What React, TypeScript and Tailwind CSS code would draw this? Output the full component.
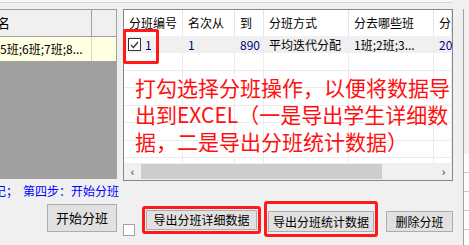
import React from "react";

const COLS = [
  { title: "分班编号", w: "w-[59px]" },
  { title: "名次从", w: "w-[52px]" },
  { title: "到", w: "w-[29px]" },
  { title: "分班方式", w: "w-[85px]" },
  { title: "分去哪些班", w: "w-[85px]" },
  { title: "分", w: "flex-1" },
];

const ROW = ["1", "1", "890", "平均迭代分配", "1班;2班;3...", "20"];

const CheckIcon = () => (
  <svg width="9" height="8" viewBox="0 0 9 8" fill="none">
    <path d="M1 4 L3.5 6.5 L8 1" stroke="#333" strokeWidth="1.3" />
  </svg>
);

export default function App() {
  return (
    <div className="relative w-[469px] h-[245px] overflow-hidden bg-[#f0f0f0] font-['Noto_Sans_CJK_SC',sans-serif] text-[12px] text-black">
      {/* top strip */}
      <div className="h-[9px]">
        <div className="w-[452px] h-[3px] bg-[#f7f7f7] border-b border-[#d4d4d4]" />
      </div>

      <div className="flex h-[172px]">
        {/* left grid */}
        <div className="w-[117px] h-[170px] flex flex-col border-t border-r border-[#a0a0a0]">
          <div className="h-[27px] flex bg-[#f0f0f0]">
            <div className="w-[92px] border-r border-b border-[#a0a0a0] flex items-center pl-0">
              <span className="-ml-[3px] text-[13px]">名</span>
            </div>
            <div className="flex-1 border-b border-[#a0a0a0]" />
          </div>
          <div className="h-[24px] flex bg-[#ffffe1]">
            <div className="w-[92px] border-r border-[#d8d8c0] flex items-center whitespace-nowrap overflow-hidden">
              5班;6班;7班;8...
            </div>
            <div className="flex-1" />
          </div>
          <div className="flex-1 bg-[#a0a0a0]" />
        </div>

        {/* main table */}
        <div className="ml-[6px] w-[330px] h-[172px] border border-[#828790] bg-white flex flex-col">
          <div className="h-[26px] flex">
            {COLS.map((c) => (
              <div
                key={c.title}
                className={`${c.w} border-r border-[#e5e5e5] flex items-center pl-[5px] whitespace-nowrap overflow-hidden`}
              >
                {c.title}
              </div>
            ))}
          </div>
          <div className="h-[17px] flex bg-[#f0f0f0]">
            {COLS.map((c, i) => (
              <div
                key={c.title}
                className={`${c.w} flex items-center pl-[5px] whitespace-nowrap overflow-hidden ${
                  i < 3 || i === 5 ? "text-[#00007a]" : ""
                }`}
              >
                {i === 0 && (
                  <span className="mr-[4px] -ml-[1px] w-[13px] h-[13px] border border-[#333] bg-white flex items-center justify-center">
                    <CheckIcon />
                  </span>
                )}
                {ROW[i]}
              </div>
            ))}
          </div>
          <div className="flex-1 flex flex-col overflow-hidden">
            {Array.from({ length: 7 }).map((_, r) => (
              <div key={r} className="h-[17.5px] flex border-b border-[#ececec] shrink-0">
                {COLS.map((c) => (
                  <div key={c.title} className={`${c.w} border-r border-[#ececec]`} />
                ))}
              </div>
            ))}
          </div>
          <div className="h-[17px] flex items-center bg-[#f0f0f0]">
            <div className="w-[17px] flex justify-center text-[#606060] text-[11px] font-bold">‹</div>
            <div className="w-[241px] h-[15px] bg-[#cdcdcd]" />
            <div className="flex-1" />
            <div className="w-[17px] flex justify-center text-[#606060] text-[11px] font-bold">›</div>
          </div>
        </div>

        {/* right stub */}
        <div className="flex-1 flex h-[245px]">
          <div className="w-[10px]" />
          <div className="flex-1 border-l border-[#a0a0a0] flex flex-col">
            <div className="h-[145px]" />
            {Array.from({ length: 5 }).map((_, r) => (
              <div key={r} className="h-[19px] border-b border-[#c8c8c8] bg-white" />
            ))}
          </div>
        </div>
      </div>

      {/* bottom */}
      <div className="absolute left-0 top-[181px] w-[455px]">
        <div className="h-[20px] flex items-center text-[#0000ff] whitespace-nowrap">
          <span className="-ml-[6px]">记；</span>
          <span className="ml-[5px]">第四步：开始分班</span>
        </div>
        <div className="flex items-start">
          <button className="ml-[47px] mt-[3px] w-[70px] h-[28px] bg-[#e1e1e1] border border-[#adadad] text-[13px]">
            开始分班
          </button>
          <div className="ml-[6px] mt-[23px] w-[12px] h-[12px] border border-[#a0a0a0] bg-white" />
          <div className="ml-[7px] mt-[5px] w-[119px] h-[28px] border-[3px] border-[#ff1a1a] rounded-[3px] p-[1px]">
            <button className="w-full h-full bg-[#e1e1e1] border border-[#adadad] text-[12px] whitespace-nowrap">
              导出分班详细数据
            </button>
          </div>
          <div className="ml-[3px] w-[114px] h-[36px] border-[3px] border-[#ff1a1a] rounded-[3px] pt-[7px] px-[1px]">
            <button className="w-full h-[21px] bg-[#e1e1e1] border border-[#adadad] text-[12px] whitespace-nowrap">
              导出分班统计数据
            </button>
          </div>
          <button className="ml-[8px] mt-[10px] w-[67px] h-[21px] bg-[#e1e1e1] border border-[#adadad] text-[12px]">
            删除分班
          </button>
        </div>
      </div>

      {/* annotations */}
      <div className="absolute left-[123px] top-[29px] w-[36px] h-[35px] border-[3px] border-[#ff1a1a] rounded-[2px]" />
      <div className="absolute left-[135px] top-[74px] text-[21px] leading-[27px] text-[#ff1010] whitespace-nowrap">
        打勾选择分班操作，以便将数据导
        <br />
        出到EXCEL（一是导出学生详细数
        <br />
        据，二是导出分班统计数据）
      </div>
    </div>
  );
}
